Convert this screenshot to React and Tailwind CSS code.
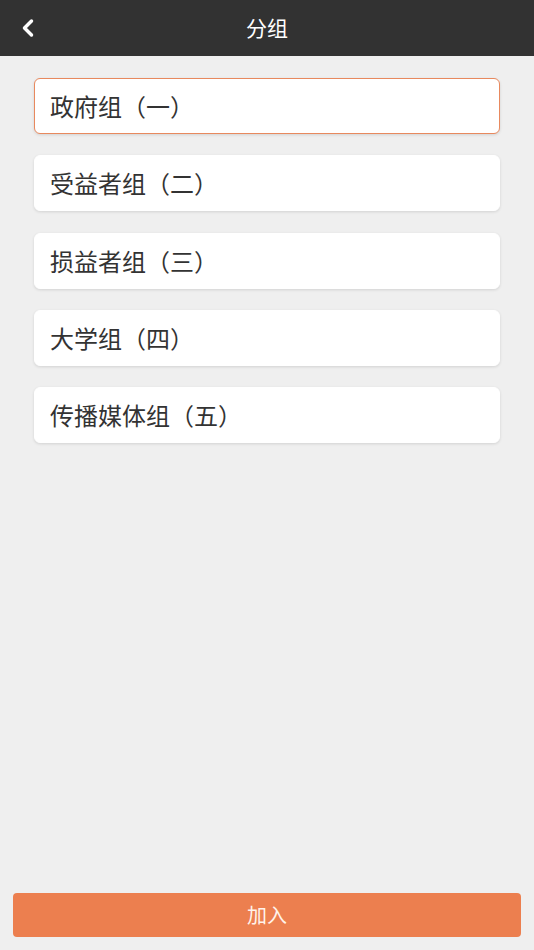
import { ChevronLeft } from 'lucide-react';

const groups = ['政府组（一）', '受益者组（二）', '损益者组（三）', '大学组（四）', '传播媒体组（五）'];

export default function App() {
  return (
    <div
      className="flex h-[950px] w-[534px] flex-col bg-[#efefef]"
      style={{ fontFamily: '"Noto Sans CJK SC", "Noto Sans", sans-serif' }}
    >
      <header className="relative flex h-[56px] shrink-0 items-center justify-center bg-[#323232]">
        <button className="absolute left-[14px] top-[14px] text-white">
          <ChevronLeft size={28} strokeWidth={3} />
        </button>
        <h1 className="text-[21px] text-white">分组</h1>
      </header>

      <main className="flex flex-1 flex-col gap-[21.3px] px-[34px] pt-[22px]">
        {groups.map((name, i) => (
          <div
            key={name}
            className={
              i === 0
                ? 'flex h-[56px] items-center rounded-[6px] border border-[#e8895e] bg-white pl-[15px] shadow-[0_1px_3px_rgba(0,0,0,0.12)]'
                : 'flex h-[56px] items-center rounded-[6px] border border-white bg-white pl-[15px] shadow-[0_1px_3px_rgba(0,0,0,0.12)]'
            }
          >
            <span className="text-[24px] text-[#333333]">{name}</span>
          </div>
        ))}
      </main>

      <div className="px-[13px] pb-[13px]">
        <button className="flex h-[44px] w-full items-center justify-center rounded-[4px] bg-[#ec7f4f] text-[20px] text-[#fff3ea]">
          加入
        </button>
      </div>
    </div>
  );
}
